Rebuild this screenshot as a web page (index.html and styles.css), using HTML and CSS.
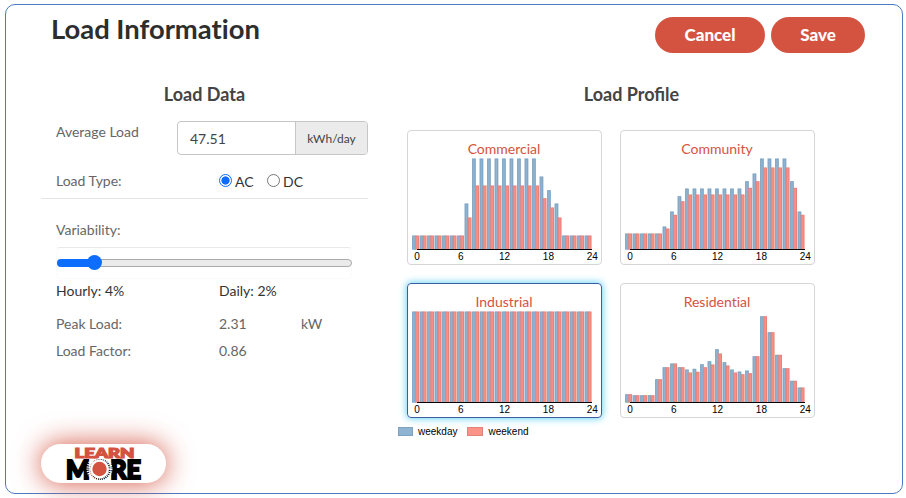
FILE: index.html
```html
<!DOCTYPE html>
<html lang="en">
<head>
<meta charset="utf-8">
<title>Load Information</title>
<link rel="stylesheet" href="styles.css">
</head>
<body>
<main class="panel">
  <header class="header">
    <h1>Load Information</h1>
    <div class="actions">
      <button class="btn cancel">Cancel</button>
      <button class="btn save">Save</button>
    </div>
  </header>
  <div class="content">
    <section class="data">
      <h2>Load Data</h2>
      <div class="row average">
        <span class="label">Average Load</span>
        <div class="group"><span class="value">47.51</span><span class="addon">kWh/day</span></div>
      </div>
      <div class="row type">
        <span class="label">Load Type:</span>
        <span class="option"><i class="radio checked"></i>AC</span>
        <span class="option"><i class="radio"></i>DC</span>
      </div>
      <div class="variability">Variability:</div>
      <div class="range"><div class="track"><div class="fill"></div><div class="thumb"></div></div></div>
      <div class="stats dark"><span>Hourly: 4%</span><span>Daily: 2%</span></div>
      <div class="stats peak"><span>Peak Load:</span><span>2.31</span><span>kW</span></div>
      <div class="stats factor"><span>Load Factor:</span><span>0.86</span></div>
    </section>
    <section class="profile">
      <h2>Load Profile</h2>
      <div class="cards">
        <div class="card"><h3>Commercial</h3><svg class="chart" data-profile="commercial" width="193" height="110"></svg></div>
        <div class="card"><h3>Community</h3><svg class="chart" data-profile="community" width="193" height="110"></svg></div>
        <div class="card selected"><h3>Industrial</h3><svg class="chart" data-profile="industrial" width="193" height="110"></svg></div>
        <div class="card"><h3>Residential</h3><svg class="chart" data-profile="residential" width="193" height="110"></svg></div>
      </div>
      <div class="legend"><i class="swatch weekday"></i><span class="name">weekday</span><i class="swatch weekend"></i><span class="name">weekend</span></div>
    </section>
  </div>
</main>
<a class="learn">
  <svg width="125" height="39" viewBox="0 0 125 39">
    <text class="learn-bottom" x="25" y="34.5" textLength="75" lengthAdjust="spacingAndGlyphs">MORE</text>
    <circle cx="58.5" cy="25" r="9.5" fill="#fff"/>
    <circle cx="58.5" cy="25" r="11" fill="none" stroke="#fff" stroke-width="4" stroke-dasharray="1.1 1"/>
    <circle cx="58.5" cy="25" r="7.2" fill="#d35340"/>
    <text class="learn-top" x="33.5" y="13.5" textLength="60" lengthAdjust="spacingAndGlyphs">LEARN</text>
  </svg>
</a>
<script src="charts.js"></script>
</body>
</html>
```
FILE: styles.css
```css
* { box-sizing: border-box; }
body { margin: 0; height: 498px; overflow: hidden; background: #fff; font-family: Lato, sans-serif; color: #333; font-size: 14px; position: relative; }
h1, h2, h3 { margin: 0; font-weight: 700; }
.panel { margin: 4px 3px 0 5px; height: 490px; border: 1px solid #4a7ac4; border-radius: 10px; }
.header { display: flex; justify-content: space-between; padding: 7px 37px 0 45px; height: 68px; }
h1 { font-size: 27.4px; line-height: 34px; color: #2d2d2d; font-variant-ligatures: none; }
.actions { display: flex; gap: 6px; padding-top: 5px; }
.btn { height: 36px; padding: 0 0 1px; border: 0; border-radius: 18px; background: #d35340; color: #fff; font: 900 17px Lato, sans-serif; }
.cancel { width: 110px; }
.save { width: 94px; }
.content { display: flex; }
h2 { font-size: 18px; line-height: 22px; text-align: center; color: #444; padding-top: 5px; height: 27px; }
.data { width: 327px; margin-left: 35px; padding-top: 5px; color: #666; }
.row { display: flex; }
.average { margin-top: 16px; padding-left: 15px; justify-content: space-between; }
.average .label { line-height: 22px; }
.group { display: flex; width: 191px; height: 34px; border: 1px solid #c6c6c6; border-radius: 4px; overflow: hidden; line-height: 34px; color: #444; }
.value { flex: 1; padding-left: 12px; }
.addon { width: 72px; border-left: 1px solid #c6c6c6; background: #ebebeb; text-align: center; font-size: 12px; }
.type { margin-top: 11px; height: 33px; padding: 3px 0 0 15px; line-height: 24px; border-bottom: 1px solid #e5e5e5; }
.type .label { width: 163px; }
.option { display: flex; width: 48px; color: #333; line-height: 26px; }
.radio { width: 13px; height: 13px; margin: 5px 3px 0 0; border: 1px solid #777; border-radius: 50%; }
.radio.checked { border-color: #0d6efd; background: radial-gradient(#0d6efd 0 3.8px, #fff 4.4px); }
.variability { margin: 20px 0 0 15px; line-height: 22px; }
.range { width: 296px; height: 32px; margin: 6px 0 0 15px; border: 1px solid #fbfbfb; border-top-color: #e9e9e9; border-radius: 4px; padding-top: 11px; }
.track { position: relative; width: 295px; height: 8px; border: 1px solid #aaa; border-radius: 4px; background: #ebebeb; }
.fill { width: 37px; height: 8px; margin: -1px; border-radius: 4px 0 0 4px; background: #0d6efd; }
.thumb { position: absolute; left: 29px; top: -5px; width: 15px; height: 15px; border-radius: 50%; background: #0d6efd; }
.stats { display: grid; grid-template-columns: 163px 82px 1fr; padding-left: 15px; line-height: 22px; }
.dark { color: #333; margin-top: 1px; }
.peak { margin-top: 11px; }
.factor { margin-top: 5px; }
.profile { width: 467px; margin-left: 30px; padding-top: 5px; }
.cards { display: grid; grid-template-columns: 195px 195px; gap: 18px; margin: 25px 0 0 9px; }
.card { height: 135px; border: 1px solid #d5d5d5; border-radius: 4px; padding-top: 10px; }
.selected { border-color: #3a5da8; box-shadow: 0 0 7px 1px #6fd6f5; }
h3 { font-size: 14px; font-weight: 400; line-height: 15px; height: 17px; padding-right: 1px; text-align: center; color: #d35340; font-variant-ligatures: none; }
.chart { display: block; font: 10px "Liberation Sans", sans-serif; }
.legend { display: flex; align-items: center; height: 14px; margin-top: 6px; font: 10px "Liberation Sans", sans-serif; color: #000; }
.swatch { width: 15px; height: 9px; border: 1px solid #7fa3be; background: #8fb4d2; }
.swatch.weekend { width: 16px; margin-left: 10px; border-color: #e3827a; background: #fc9389; }
.name { margin-left: 5px; }
.learn { position: absolute; left: 41px; top: 444px; width: 125px; height: 39px; border-radius: 20px; background: #fff; box-shadow: 0 0 28px #d35340; }
.learn svg { display: block; overflow: visible; }
.learn-top { font: 900 12.5px Lato, sans-serif; fill: #d35340; stroke: #d35340; stroke-width: 1.2px; }
.learn-bottom { font: 900 27px Lato, sans-serif; fill: #000; stroke: #000; stroke-width: 2.2px; }
```
FILE: charts.js
```js
const fill = (n, v) => Array(n).fill(v);
const profiles = {
  commercial: [
    [...fill(7, 14), 46, ...fill(9, 91), 73, 59.3, 46, ...fill(4, 14)],
    [...fill(7, 14), 32, ...fill(9, 64), 51.3, 42, 32, ...fill(4, 14)]
  ],
  community: [
    [...fill(5, 16), 23, 38, 53.3, ...fill(8, 61), 68.3, 76, ...fill(4, 91), 68.3, 38],
    [...fill(5, 16), 21, 34.7, 48.3, ...fill(8, 55), 61.7, 68.3, ...fill(4, 82), 61.7, 34.7]
  ],
  industrial: [fill(24, 91), fill(24, 91)],
  residential: [
    [8.3, 7.3, 7.3, 7.3, 23.3, 35.3, 39, 35.3, 33, 33.7, 38.3, 41.3, 53.3, 40.3, 33, 31, 32, 46.3, 86.3, 70.3, 47.7, 34.3, 21.7, 15],
    [8.3, 7.3, 7.3, 7.3, 23.3, 35.3, 39, 35.3, 30, 30.7, 35.3, 38, 49, 37, 30, 28.3, 29.3, 46.3, 86.3, 70.3, 47.7, 34.3, 21.7, 15]
  ]
};
const base = 91.5;
document.querySelectorAll('.chart').forEach(svg => {
  const [weekday, weekend] = profiles[svg.dataset.profile];
  const bar = (x, h, color, edge) =>
    `<rect x="${x}" y="${base - h}" width="3.7" height="${h}" fill="${color}"/>` +
    `<rect x="${x + .5}" y="${base - h + .5}" width="2.7" height="${h - .5}" fill="none" stroke="${edge}" stroke-opacity=".3"/>`;
  let out = '';
  weekday.forEach((h, i) => {
    const x = 4.1 + i * 7.5;
    out += bar(x, h, '#8fb4d2', '#5c7f99') + bar(x + 3.2, weekend[i], '#f88f86', '#bc6a62');
  });
  out += `<path d="M9 ${base}H184" stroke="#000"/>`;
  [0, 6, 12, 18, 24].forEach((n, i) => {
    out += `<text x="${9 + i * 43.8}" y="102" text-anchor="middle">${n}</text>`;
  });
  svg.innerHTML = out;
});
```
